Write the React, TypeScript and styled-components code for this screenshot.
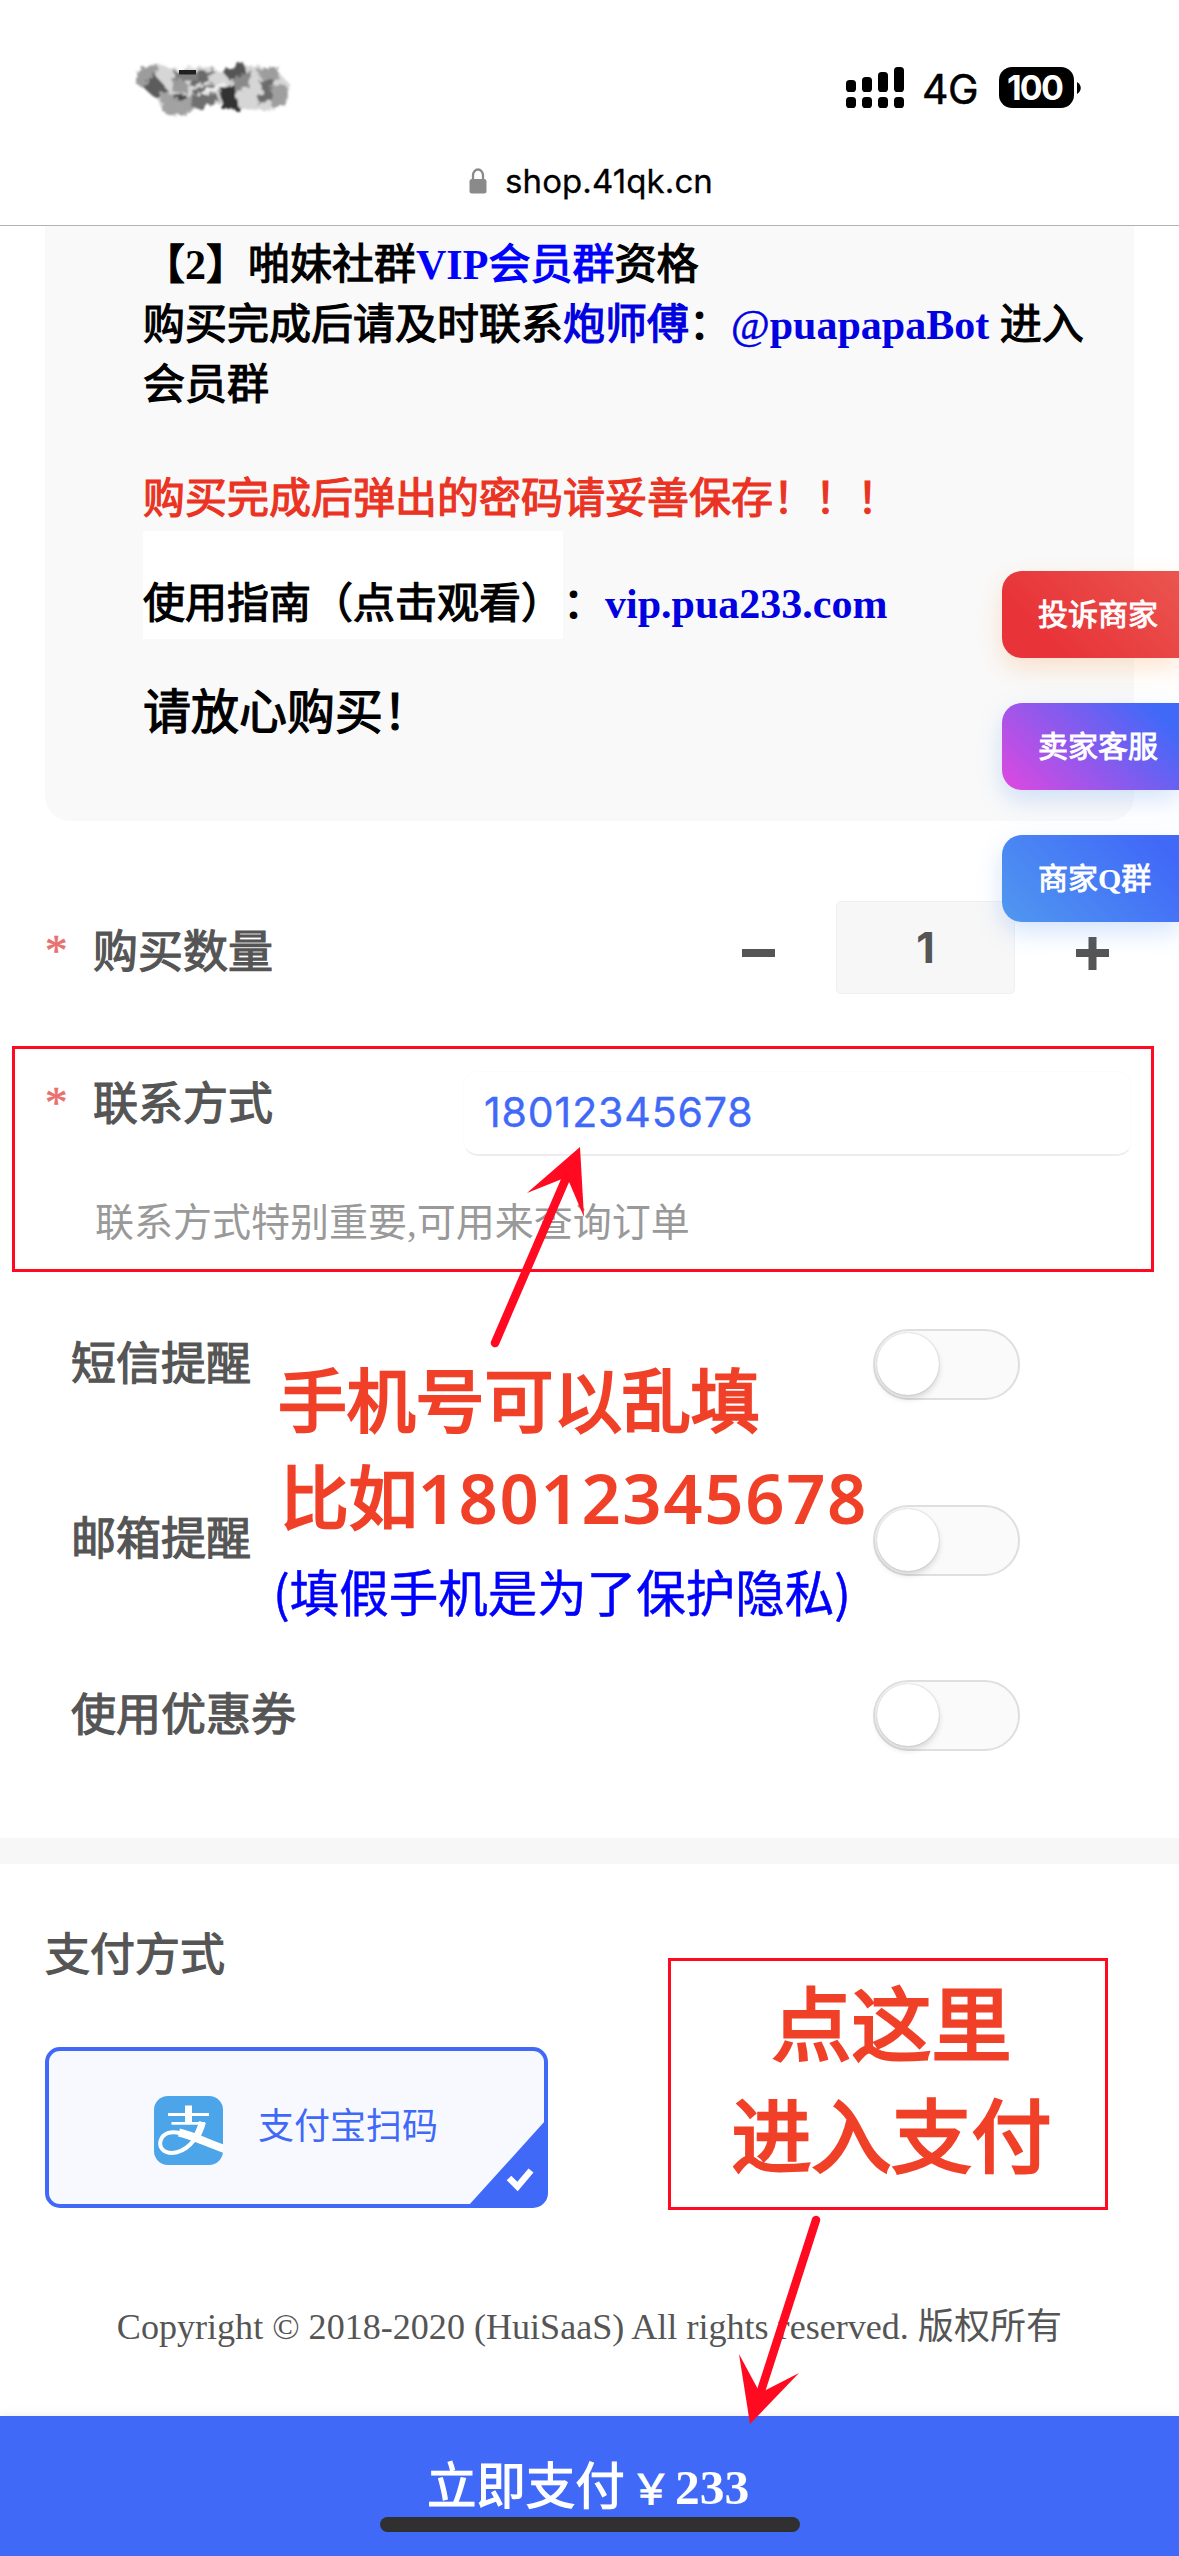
import React from "react";
import styled, { createGlobalStyle, css } from "styled-components";

const GlobalStyle = createGlobalStyle`
  * { box-sizing: border-box; }
  body { margin: 0; background: #fff; }
`;

const serif = `"Liberation Serif", "Noto Sans CJK SC", serif`;
const sans = `Inter, "Noto Sans CJK SC", sans-serif`;
const hei = `"Noto Sans CJK SC", sans-serif`;

/* A medium weight for Chinese text, between the regular and bold cuts */
const medium = css<{ $ink?: number }>`
  font-weight: 400;
  -webkit-text-stroke: ${(p) => p.$ink ?? 1.2}px currentColor;
`;

const Latin = styled.span<{ $light?: boolean }>`
  font-family: "Liberation Serif", serif;
  font-weight: ${(p) => (p.$light ? 400 : 700)};
  -webkit-text-stroke: ${(p) => (p.$light ? 0.5 : 0)}px currentColor;
`;

const Page = styled.div`
  position: relative;
  width: 1179px;
  height: 2556px;
  overflow: hidden;
  display: flex;
  flex-direction: column;
  background: #fff;
  color: #000;
  font-family: ${serif};
  white-space: nowrap;
`;

/* ---------- status bar and address bar ---------- */

const BrowserTop = styled.header`
  height: 226px;
  flex: none;
  border-bottom: 1px solid #b2b2b2;
  font-family: ${sans};
`;

const StatusBar = styled.div`
  height: 150px;
  padding: 50px 98px 0 129px;
  display: flex;
  justify-content: space-between;
  align-items: flex-start;
`;

const StatusIcons = styled.div`
  height: 75px;
  display: flex;
  align-items: center;
`;

const Network = styled.span`
  width: 77px;
  padding-left: 18px;
  font-size: 41px;
  line-height: 50px;
  letter-spacing: -0.5px;
  margin-top: 3px;
  -webkit-text-stroke: 0.5px currentColor;
`;

const Battery = styled.div`
  margin-left: 18px;
  width: 75px;
  height: 41px;
  padding-right: 4px;
  border-radius: 13px;
  background: #000;
  color: #fff;
  font-size: 34px;
  font-weight: 700;
  line-height: 41px;
  letter-spacing: -1.8px;
  text-align: center;
`;

const AddressBar = styled.div`
  height: 62px;
  padding-left: 3px;
  display: flex;
  justify-content: center;
  align-items: center;
  gap: 18px;
  font-size: 33px;
`;

const Url = styled.span`
  line-height: 40px;
  letter-spacing: 0.1px;
  -webkit-text-stroke: 0.3px currentColor;
`;

/* ---------- product description ---------- */

const Description = styled.section`
  margin: 0 45px;
  height: 595px;
  flex: none;
  padding: 9px 0 0 98px;
  background: #f9f9f9;
  border-radius: 0 0 25px 25px;
  font-size: 42px;
  line-height: 60px;
  ${medium}
`;

const Line = styled.p<{ $gap?: number; $color?: string; $size?: number }>`
  margin: ${(p) => p.$gap ?? 0}px 0 0;
  height: 60px;
  color: ${(p) => p.$color ?? "#000"};
  font-size: ${(p) => p.$size ?? 42}px;
`;

const Link = styled.span<{ $dark?: boolean }>`
  color: ${(p) => (p.$dark ? "#0000e0" : "#0000ff")};
`;

const GuideLine = styled.p`
  margin: 2px 0 0;
  height: 108px;
  display: flex;
  line-height: 146px;
`;

const GuideLabel = styled.span`
  width: 420px;
  background: #fff;
`;

/* ---------- order form ---------- */

const Field = styled.div<{ $height: number }>`
  height: ${(p) => p.$height}px;
  flex: none;
  padding: 0 47px 0 46px;
  display: flex;
  color: #555;
`;

const Star = styled.span`
  width: 48px;
  margin-left: -1px;
  padding-top: 1px;
  color: #e87070;
  font-size: 45px;
  line-height: 60px;
  -webkit-text-stroke: 0.6px currentColor;
`;

const Label = styled.span`
  flex: 1;
  font-size: 45px;
  line-height: 60px;
  font-family: ${hei};
  ${medium}
`;

const QuantityField = styled(Field)`
  margin-top: 80px;
  padding-right: 70px;
`;

const Offset = styled.div<{ $top: number }>`
  display: flex;
  flex: 1;
  padding-top: ${(p) => p.$top}px;
`;

const Stepper = styled.div`
  display: flex;
  align-items: flex-start;
`;

const StepIcon = styled.svg`
  width: 33px;
  height: 33px;
  margin-top: 36px;
  display: block;
`;

const Count = styled.div`
  width: 179px;
  height: 93px;
  margin: 0 61px;
  border: 1px solid #f0f0f0;
  border-radius: 5px;
  background: #f7f7f7;
  text-align: center;
  font-family: ${sans};
  font-weight: 700;
  font-size: 43px;
  line-height: 91px;
`;

const ContactField = styled(Field)`
  margin-top: 77px;
`;

const ContactInput = styled.div`
  width: 669px;
  height: 85px;
  padding-left: 20px;
  border: 1px solid #fbfbfb;
  border-bottom: 2px solid #ededed;
  border-radius: 15px;
  color: #4169f8;
  font-family: ${sans};
  font-size: 41px;
  letter-spacing: 0.9px;
  line-height: 80px;
  -webkit-text-stroke: 0.4px currentColor;
`;

const Hint = styled.p`
  margin: 0;
  height: 121px;
  flex: none;
  padding: 37px 0 0 95px;
  font-size: 39px;
  line-height: 60px;
  color: #999;
`;

const Switches = styled.div`
  height: 561px;
  flex: none;
`;

const SwitchRow = styled.div`
  height: 175.5px;
  padding: 0 159px 0 71px;
  display: flex;
  align-items: center;
  color: #555;

  ${Label} {
    padding-bottom: 8px;
  }
`;

const Track = styled.div`
  width: 147px;
  height: 71px;
  border: 2px solid #dfdfdf;
  border-radius: 36px;
  background: #fafafa;
  padding: 2px;
`;

const Knob = styled.div`
  width: 62px;
  height: 62px;
  border-radius: 50%;
  background: #fff;
  box-shadow: 0 4px 6px rgba(0, 0, 0, 0.14), 0 0 2px rgba(0, 0, 0, 0.22);
`;

const Divider = styled.div`
  height: 26px;
  flex: none;
  background: #f7f7f7;
`;

/* ---------- payment ---------- */

const Payment = styled.section`
  height: 552px;
  flex: none;
  padding: 58px 45px 0;
  color: #555;
`;

const PaymentTitle = styled.h2`
  margin: 0;
  height: 125px;
  font-family: ${hei};
  font-size: 45px;
  line-height: 60px;
  ${medium}
`;

const PayOption = styled.div`
  position: relative;
  width: 503px;
  height: 161px;
  border: 4px solid #4169f8;
  border-radius: 15px;
  background: #f8f9ff;
  display: flex;
  align-items: flex-start;
  gap: 35px;
  padding: 45px 0 0 105px;
  color: #4169f8;
  font-family: ${hei};
  font-size: 36px;
  line-height: 54px;
`;

const Corner = styled.svg`
  position: absolute;
  right: -1px;
  bottom: -1px;
`;

const Copyright = styled.footer`
  margin-top: 89px;
  text-align: center;
  font-size: 36.1px;
  line-height: 60px;
`;

const PayBar = styled.div`
  height: 140px;
  flex: none;
  padding-top: 38px;
  background: #4169f8;
  box-shadow: 0 -2px 10px rgba(0, 0, 0, 0.06);
  color: #fff;
`;

const PayText = styled.div`
  height: 63px;
  padding-right: 3px;
  text-align: center;
  font-size: 49.5px;
  line-height: 67px;
  ${medium}
`;

const Yen = styled.span`
  display: inline-block;
  width: 50px;
  padding-left: 2px;
  text-align: center;
  font-size: 41px;
`;

const HomeIndicator = styled.div`
  width: 420px;
  height: 15px;
  margin: 0 auto;
  border-radius: 8px;
  background: #303030;
`;

/* ---------- overlays ---------- */

const FloatMenu = styled.nav`
  position: absolute;
  top: 571px;
  right: 0;
  display: flex;
  flex-direction: column;
  gap: 45px;
`;

const FloatButton = styled.div<{ $fill: string; $shadow: string }>`
  width: 177px;
  height: 87px;
  padding-left: 36px;
  border-radius: 20px 0 0 20px;
  background: ${(p) => p.$fill};
  box-shadow: 0 10px 24px ${(p) => p.$shadow};
  color: #fff;
  font-size: 30px;
  line-height: 87px;
  font-weight: 400;
  -webkit-text-stroke: 0.9px currentColor;
`;

const Frame = styled.div<{ $x: number; $y: number; $w: number; $h: number }>`
  position: absolute;
  left: ${(p) => p.$x}px;
  top: ${(p) => p.$y}px;
  width: ${(p) => p.$w}px;
  height: ${(p) => p.$h}px;
  border: 3px solid #ff0a20;
`;

const PayNote = styled(Frame)<{ $ink?: number }>`
  padding: 2px 0 0 7px;
  color: #f04028;
  font-family: ${hei};
  font-size: 80px;
  line-height: 112px;
  text-align: center;
  ${medium}
`;

const PhoneNote = styled.div<{ $ink?: number }>`
  position: absolute;
  left: 278px;
  top: 1349px;
  color: #f04028;
  font-family: ${hei};
  font-size: 68.8px;
  line-height: 97px;
  ${medium}
`;

const Example = styled.div`
  padding-left: 2px;
`;

const Digits = styled.span`
  font-family: "Noto Sans", sans-serif;
  font-weight: 600;
  letter-spacing: 1.6px;
  -webkit-text-stroke: 0;
`;

const PrivacyNote = styled.div`
  color: #0000ff;
  font-size: 49.5px;
  line-height: 90px;
  margin-left: -5px;
  -webkit-text-stroke: 0.5px currentColor;
`;

const Arrows = styled.svg`
  position: absolute;
  left: 0;
  top: 0;
  pointer-events: none;
`;

const Smudge = () => (
  <svg width="190" height="75" viewBox="0 0 190 75">
    <defs>
      <filter id="soft" x="-10%" y="-10%" width="120%" height="120%">
        <feTurbulence type="fractalNoise" baseFrequency="0.16" numOctaves="3" seed="4" result="noise" />
        <feDisplacementMap in="SourceGraphic" in2="noise" scale="9" result="rough" />
        <feGaussianBlur in="rough" stdDeviation="1.2" />
      </filter>
    </defs>
    <g filter="url(#soft)">
      <path d="M10 19 L30 15 L50 20 L78 16 L95 22 L112 14 L148 20 L160 34 L158 50 L140 60 L110 58 L90 52 L70 58 L45 64 L32 58 L26 44 L8 34Z" fill="#d6d6d6" />
      <path d="M9 18 L30 15 L27 28 L14 38 L7 34Z" fill="#9c9c9c" />
      <path d="M24 23 L34 34 L39 41 L26 48 L15 38Z" fill="#5c5c5c" />
      <path d="M43 28 L59 26 L58 43 L43 42Z" fill="#9c9c9c" />
      <path d="M30 42 L44 44 L66 48 L67 60 L48 66 L35 63Z" fill="#a2a2a2" />
      <path d="M64 40 L84 33 L89 49 L74 60 L62 57Z" fill="#6f6f6f" />
      <path d="M66 24 L86 20 L74 34 L60 36Z" fill="#6a6a6a" />
      <path d="M94 22 L114 12 L117 25 L101 31Z" fill="#555" />
      <path d="M92 37 L106 35 L110 60 L93 60Z" fill="#303030" />
      <path d="M105 29 L122 19 L120 37 L106 42Z" fill="#8a8a8a" />
      <path d="M128 20 L149 16 L150 30 L133 30Z" fill="#9d9d9d" />
      <path d="M130 31 L144 29 L144 50 L126 53 L134 43Z" fill="#6c6c6c" />
      <path d="M143 34 L157 36 L158 55 L143 57Z" fill="#9f9f9f" />
      <path d="M64 46 L96 32 L94 37 L88 42Z" fill="#f0f0f0" />
      <path d="M45 46l12-2v4l-12 3z" fill="#444" />
      <path d="M46 22h24v8H46z" fill="#808080" />
    </g>
    <path d="M50 20h17v4.500H50z" fill="#202020" />
  </svg>
);

const Signal = () => (
  <svg width="58" height="41" viewBox="0 0 58 41">
    {[13, 10, 5, 0].map((top, i) => (
      <g key={i}>
        <rect x={i * 16} y={top} width="10" height={25 - top} rx="3.6" />
        <rect x={i * 16} y="30" width="10" height="11" rx="3.6" />
      </g>
    ))}
  </svg>
);

const Alipay = () => (
  <svg width="69" height="69" viewBox="0 0 69 69">
    <clipPath id="tile">
      <rect width="69" height="69" rx="14" />
    </clipPath>
    <g clipPath="url(#tile)">
      <rect width="69" height="69" fill="#4ba5e8" />
      <g fill="none" stroke="#fff">
        <path d="M34.5 9.500V28" strokeWidth="7" />
        <path d="M14 18.500H55" strokeWidth="2.800" />
        <path d="M17.500 27.300H51" strokeWidth="2.800" />
        <path d="M46 34 C42 43 33 56 18 57 C9 57 5 51 6.500 45 C8.500 37 17 34.500 27 37.500" strokeWidth="4" />
        <path d="M25 36.500 C40 40 53 47 73 54" strokeWidth="8" />
        <path d="M48.500 26 C46.500 33 44.500 38 41 43" strokeWidth="7" />
      </g>
    </g>
  </svg>
);

const switches = ["短信提醒", "邮箱提醒", "使用优惠券"];

const floats = [
  { id: "report", text: "投诉商家", fill: "linear-gradient(45deg, #e83438 25%, #ea5550)", shadow: "rgba(250,170,110,.32)" },
  { id: "service", text: "卖家客服", fill: "linear-gradient(45deg, #e048e0, #4169f8 88%)", shadow: "rgba(90,150,245,.26)" },
  { id: "group", text: <>商家<Latin>Q</Latin>群</>, fill: "linear-gradient(45deg, #5098f0, #4169f8 88%)", shadow: "rgba(90,150,245,.26)" },
];

export default function App() {
  return (
    <Page lang="zh-CN">
      <GlobalStyle />
      <BrowserTop>
        <StatusBar>
          <Smudge />
          <StatusIcons>
            <Signal />
            <Network>4G</Network>
            <Battery>100</Battery>
            <svg width="7" height="14" viewBox="0 0 7 14">
              <path d="M3 1C8 4 8 10 3 13Z" />
            </svg>
          </StatusIcons>
        </StatusBar>
        <AddressBar>
          <svg width="18" height="26" viewBox="0 0 18 26">
            <path d="M4 13V7.500a5 6 0 0 1 10 0V13" fill="none" stroke="#8a8a8a" strokeWidth="2.300" />
            <rect x="0.500" y="11" width="17" height="14.500" rx="2.500" fill="#8a8a8a" />
          </svg>
          <Url>shop.41qk.cn</Url>
        </AddressBar>
      </BrowserTop>

      <Description>
        <Line>【<Latin>2</Latin>】啪妹社群<Link><Latin>VIP</Latin>会员群</Link>资格</Line>
        <Line>购买完成后请及时联系<Link $dark>炮师傅</Link>：<Link $dark><Latin $light>@</Latin><Latin>puapapaBot</Latin></Link> 进入</Line>
        <Line>会员群</Line>
        <Line $gap={54} $color="#ea3323">购买完成后弹出的密码请妥善保存！！！</Line>
        <GuideLine>
          <GuideLabel>使用指南（点击观看）</GuideLabel>：<Link $dark><Latin>vip.pua233.com</Latin></Link>
        </GuideLine>
        <Line $gap={44} $size={48}>请放心购买！</Line>
      </Description>

      <QuantityField $height={93}>
        <Offset $top={18}>
          <Star>*</Star>
          <Label>购买数量</Label>
        </Offset>
        <Stepper>
          <StepIcon viewBox="0 0 33 33"><path d="M0 12h33v8H0z" fill="#555" /></StepIcon>
          <Count>1</Count>
          <StepIcon viewBox="0 0 33 33"><path d="M0 12h33v8H0zM12.500 0h8v33h-8z" fill="#555" /></StepIcon>
        </Stepper>
      </QuantityField>

      <ContactField $height={85}>
        <Offset $top={0}>
          <Star>*</Star>
          <Label>联系方式</Label>
        </Offset>
        <ContactInput>18012345678</ContactInput>
      </ContactField>
      <Hint>联系方式特别重要,可用来查询订单</Hint>

      <Switches>
        {switches.map((name) => (
          <SwitchRow key={name}>
            <Label>{name}</Label>
            <Track><Knob /></Track>
          </SwitchRow>
        ))}
      </Switches>
      <Divider />

      <Payment>
        <PaymentTitle>支付方式</PaymentTitle>
        <PayOption>
          <Alipay />
          <span>支付宝扫码</span>
          <Corner width="76" height="84" viewBox="0 0 76 84">
            <path d="M0 84L76 0V72Q76 84 64 84Z" fill="#4169f8" />
            <path d="M40 57l8.500 8.500 13.500-16" fill="none" stroke="#fff" strokeWidth="6.500" />
          </Corner>
        </PayOption>
        <Copyright>Copyright © 2018-2020 (HuiSaaS) All rights reserved. 版权所有</Copyright>
      </Payment>

      <PayBar>
        <PayText>立即支付<Yen>￥</Yen><Latin>233</Latin></PayText>
        <HomeIndicator />
      </PayBar>

      <FloatMenu>
        {floats.map((f) => (
          <FloatButton key={f.id} $fill={f.fill} $shadow={f.shadow}>{f.text}</FloatButton>
        ))}
      </FloatMenu>

      <Frame $x={12} $y={1046} $w={1142} $h={226} />
      <PhoneNote $ink={2.6}>
        手机号可以乱填
        <Example>比如<Digits>18012345678</Digits></Example>
        <PrivacyNote>(填假手机是为了保护隐私)</PrivacyNote>
      </PhoneNote>
      <PayNote $ink={2.8} $x={668} $y={1958} $w={440} $h={252}>
        点这里
        <br />
        进入支付
      </PayNote>

      <Arrows width="1179" height="2556" viewBox="0 0 1179 2556">
        <g stroke="#ff0a20" strokeWidth="8.500" strokeLinecap="round">
          <path d="M495 1343L567 1176" />
          <path d="M816 2220L760 2394" />
        </g>
        <g fill="#ff0a20">
          <path d="M580 1147L527 1193L567 1177L584 1217Z" />
          <path d="M750 2424L739 2354L760 2393L799 2373Z" />
        </g>
      </Arrows>
    </Page>
  );
}
